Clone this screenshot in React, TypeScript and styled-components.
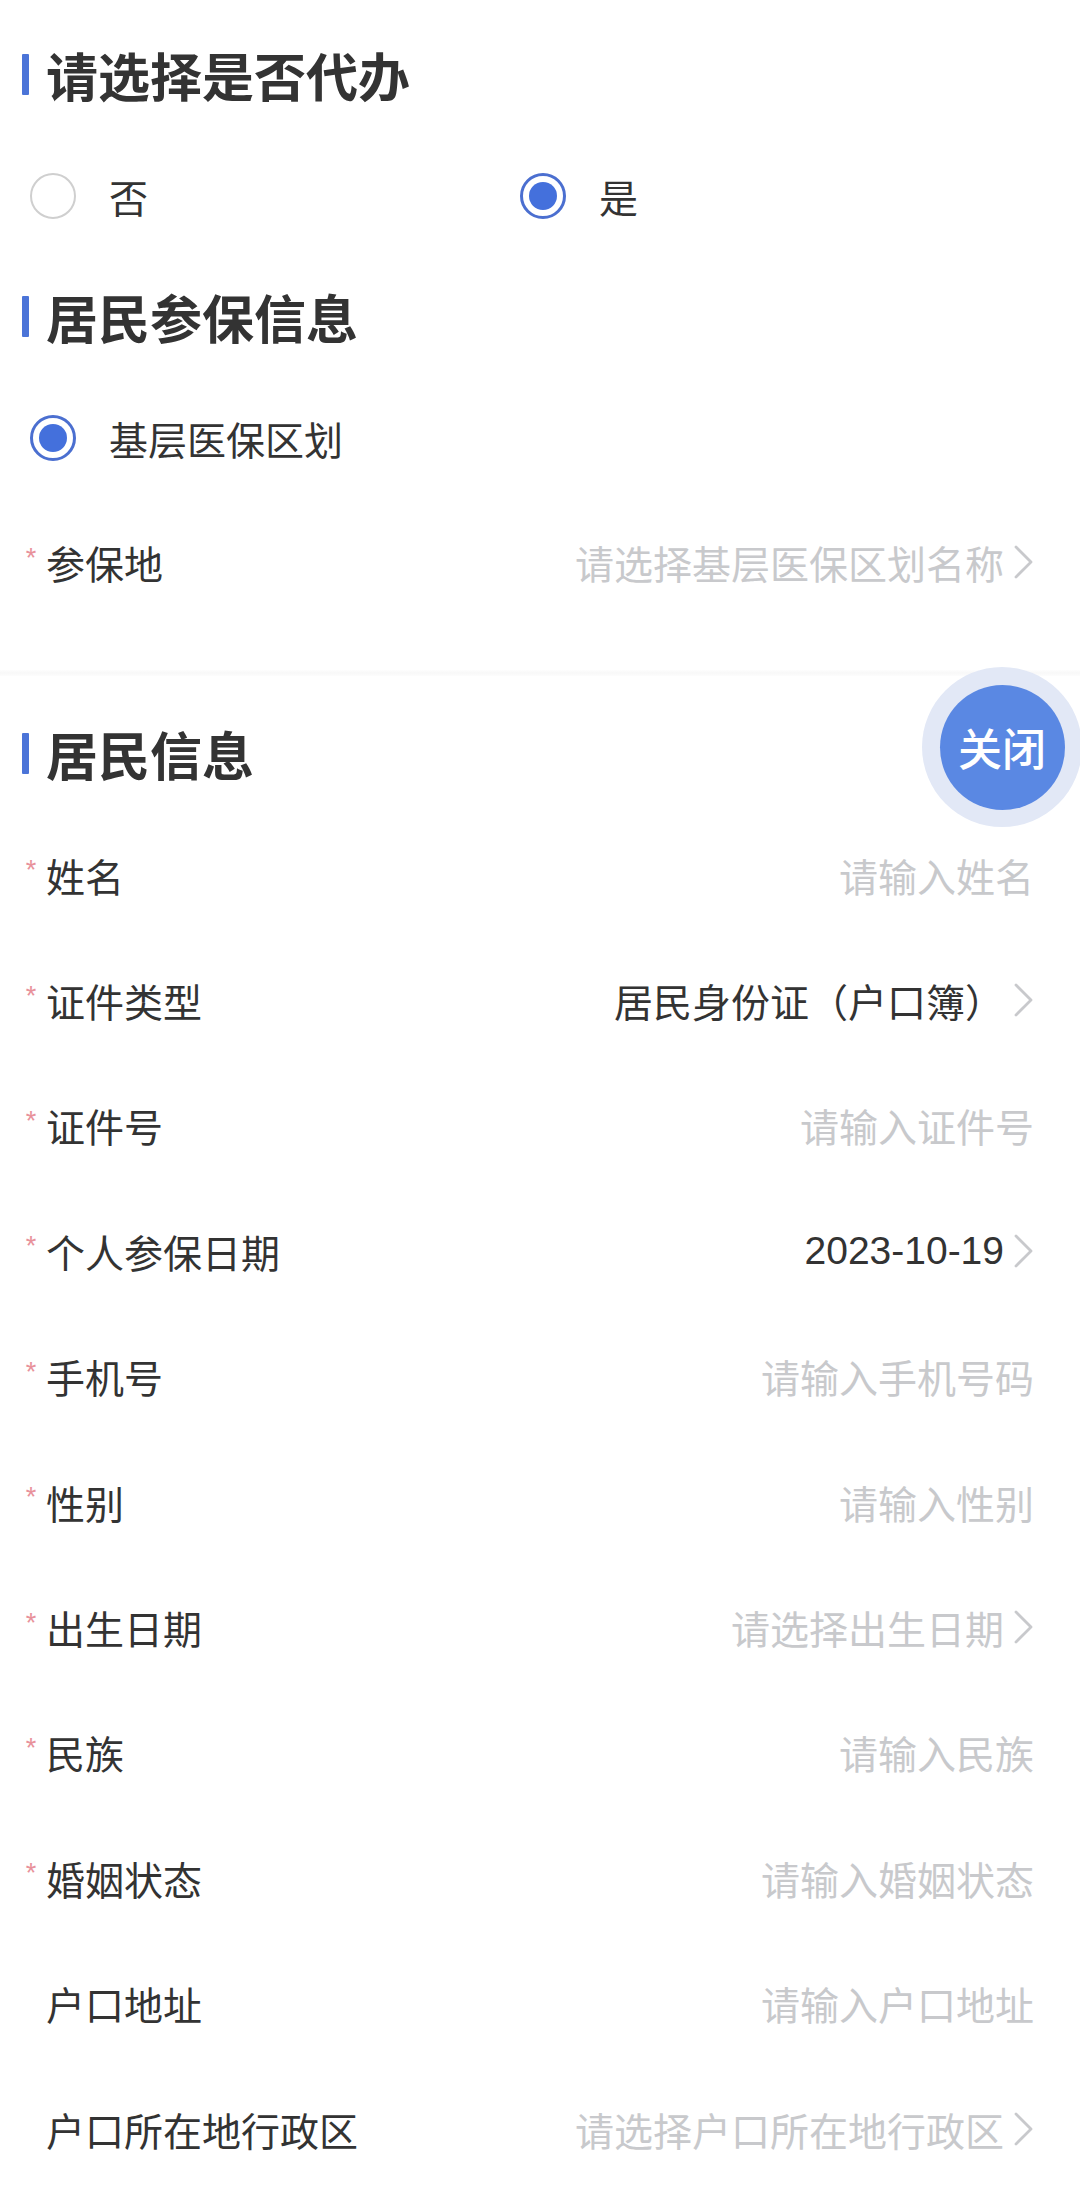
import React from "react";
import styled, { createGlobalStyle } from "styled-components";

const GlobalStyle = createGlobalStyle`
  html, body {
    margin: 0;
    padding: 0;
    background: #ffffff;
  }
  body {
    font-family: "Liberation Sans", "Noto Sans CJK SC", sans-serif;
    color: #333333;
    -webkit-font-smoothing: antialiased;
  }
  * { box-sizing: border-box; }
`;

const Page = styled.div`
  position: relative;
  width: 1080px;
  min-height: 2209px;
  background: #ffffff;
`;

const Card = styled.section<{ $top: number; $bottom: number }>`
  display: flex;
  flex-direction: column;
  padding: ${(p) => p.$top}px 46px ${(p) => p.$bottom}px 22px;
  background: #ffffff;
`;

const Divider = styled.div`
  height: 6px;
  background: linear-gradient(#fdfdfd, #f8f8f8 50%, #fdfdfd);
`;

const Heading = styled.h2<{ $h: number }>`
  display: flex;
  align-items: center;
  gap: 17px;
  height: ${(p) => p.$h}px;
  margin: 0;
  font-family: "Noto Sans CJK SC", sans-serif;
  font-size: 52px;
  font-weight: 700;
  color: #333333;
  letter-spacing: 0;
  &::before {
    content: "";
    display: block;
    width: 7px;
    height: 41px;
    background: #4b74d8;
    border-radius: 1px;
  }
`;

const RadioGroup = styled.div<{ $h: number }>`
  display: grid;
  grid-template-columns: 490px 1fr;
  align-items: center;
  height: ${(p) => p.$h}px;
  padding-left: 8px;
`;

const RadioOption = styled.label`
  display: flex;
  align-items: center;
  gap: 33px;
  font-family: "Noto Sans CJK SC", sans-serif;
  font-size: 39px;
  color: #333333;
`;

const RadioCircle = styled.span<{ $checked?: boolean }>`
  display: flex;
  align-items: center;
  justify-content: center;
  width: 46px;
  height: 46px;
  border-radius: 50%;
  border: ${(p) => (p.$checked ? "3px solid #4b6fd0" : "2px solid #cfcfcf")};
  background: #ffffff;
  &::after {
    content: "";
    display: ${(p) => (p.$checked ? "block" : "none")};
    width: 28px;
    height: 28px;
    border-radius: 50%;
    background: #4470dc;
  }
`;

const Row = styled.div<{ $h: number }>`
  display: flex;
  align-items: center;
  height: ${(p) => p.$h}px;
`;

const Required = styled.span`
  width: 24px;
  flex: none;
  align-self: center;
  text-align: center;
  font-family: "Liberation Sans", sans-serif;
  font-size: 27px;
  line-height: 1;
  color: #e8919b;
  transform: translate(-3px, -4px);
`;

const Label = styled.span`
  flex: none;
  font-family: "Noto Sans CJK SC", sans-serif;
  font-size: 39px;
  color: #333333;
  white-space: nowrap;
`;

const Value = styled.span<{ $placeholder?: boolean }>`
  flex: 1;
  display: flex;
  align-items: center;
  justify-content: flex-end;
  gap: 8px;
  font-size: 39px;
  color: ${(p) => (p.$placeholder ? "#c8c9cc" : "#333333")};
  white-space: nowrap;
`;

const Chevron = styled.svg`
  width: 22px;
  height: 34px;
  flex: none;
`;

const CloseFab = styled.button`
  position: absolute;
  top: 667px;
  right: -2px;
  width: 160px;
  height: 160px;
  border-radius: 50%;
  border: none;
  padding: 0;
  background: #e2e8f6;
  display: flex;
  align-items: center;
  justify-content: center;
  cursor: pointer;
`;

const CloseInner = styled.span`
  display: flex;
  align-items: center;
  justify-content: center;
  width: 125px;
  height: 125px;
  border-radius: 50%;
  background: #5a88e3;
  color: #ffffff;
  font-family: "Noto Sans CJK SC", sans-serif;
  font-size: 44px;
  font-weight: 500;
`;

const Arrow = () => (
  <Chevron viewBox="0 0 22 34">
    <polyline
      points="4,2 19,17 4,32"
      fill="none"
      stroke="#c8c9cc"
      strokeWidth="2.8"
      strokeLinecap="round"
      strokeLinejoin="round"
    />
  </Chevron>
);

type Field = {
  label: string;
  required: boolean;
  value: string;
  placeholder: boolean;
  arrow: boolean;
};

const residentFields: Field[] = [
  { label: "姓名", required: true, value: "请输入姓名", placeholder: true, arrow: false },
  { label: "证件类型", required: true, value: "居民身份证（户口簿）", placeholder: false, arrow: true },
  { label: "证件号", required: true, value: "请输入证件号", placeholder: true, arrow: false },
  { label: "个人参保日期", required: true, value: "2023-10-19", placeholder: false, arrow: true },
  { label: "手机号", required: true, value: "请输入手机号码", placeholder: true, arrow: false },
  { label: "性别", required: true, value: "请输入性别", placeholder: true, arrow: false },
  { label: "出生日期", required: true, value: "请选择出生日期", placeholder: true, arrow: true },
  { label: "民族", required: true, value: "请输入民族", placeholder: true, arrow: false },
  { label: "婚姻状态", required: true, value: "请输入婚姻状态", placeholder: true, arrow: false },
  { label: "户口地址", required: false, value: "请输入户口地址", placeholder: true, arrow: false },
  { label: "户口所在地行政区", required: false, value: "请选择户口所在地行政区", placeholder: true, arrow: true },
];

const FormRow = ({ field, height }: { field: Field; height: number }) => (
  <Row $h={height}>
    <Required>{field.required ? "*" : ""}</Required>
    <Label>{field.label}</Label>
    <Value $placeholder={field.placeholder}>
      {field.value}
      {field.arrow && <Arrow />}
    </Value>
  </Row>
);

export default function App() {
  return (
    <Page>
      <GlobalStyle />
      <Card $top={13} $bottom={47}>
        <Heading $h={122}>请选择是否代办</Heading>
        <RadioGroup $h={122}>
          <RadioOption>
            <RadioCircle />
            否
          </RadioOption>
          <RadioOption>
            <RadioCircle $checked />
            是
          </RadioOption>
        </RadioGroup>
        <Heading $h={118}>居民参保信息</Heading>
        <RadioGroup $h={126}>
          <RadioOption>
            <RadioCircle $checked />
            基层医保区划
          </RadioOption>
        </RadioGroup>
        <FormRow
          height={122}
          field={{
            label: "参保地",
            required: true,
            value: "请选择基层医保区划名称",
            placeholder: true,
            arrow: true,
          }}
        />
      </Card>
      <Divider />
      <Card $top={18} $bottom={20}>
        <Heading $h={118}>居民信息</Heading>
        {residentFields.map((f) => (
          <FormRow key={f.label} field={f} height={125.4} />
        ))}
      </Card>
      <CloseFab type="button">
        <CloseInner>关闭</CloseInner>
      </CloseFab>
    </Page>
  );
}
